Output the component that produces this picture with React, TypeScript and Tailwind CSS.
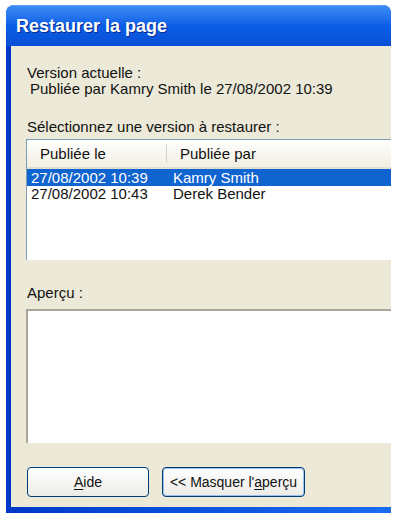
export default function App() {
  const font = { fontFamily: '"Liberation Sans", Arial, sans-serif' };
  return (
    <div className="w-[395px] h-[515px] bg-white overflow-hidden" style={font}>
      <div className="ml-[6px] mt-[5px] w-[385px] h-[508px] flex flex-col rounded-tl-[8px] rounded-tr-[8px] overflow-hidden bg-[#0a54e0]">
        {/* title bar */}
        <div className="h-[41px] shrink-0 flex items-center pl-[10px] bg-gradient-to-b from-[#3d8bf5] via-[#0a5ee6] to-[#0a4fd6] border-t border-[#5aa0ff]">
          <span className="text-white font-bold text-[18px] [text-shadow:1px_1px_0_#0a2a8a]">
            Restaurer la page
          </span>
        </div>
        {/* body with left + bottom frame */}
        <div className="flex-1 flex flex-col bg-gradient-to-r from-[#0038c8] to-[#1a6cf0] pl-[5px] pb-[6px]">
          <div className="flex-1 bg-[#ece9d8] overflow-hidden flex flex-col text-[15px] leading-[16px] text-[#111]">
            <div className="pt-[19px] pl-[16px]">
              <div>Version actuelle :</div>
              <div className="pl-[3px]">Publiée par Kamry Smith le 27/08/2002 10:39</div>
            </div>
            <div className="pl-[16px] mt-[22px]">Sélectionnez une version à restaurer :</div>
            {/* list */}
            <div className="ml-[15px] mt-[4px] h-[121px] w-[400px] shrink-0 bg-white border-t border-l border-[#7f9db9] flex flex-col">
              <div className="h-[29px] flex bg-gradient-to-b from-[#ffffff] to-[#f1efe2] border-b-[2px] border-[#e2dfd0]">
                <div className="w-[140px] flex items-center pl-[13px] border-r border-[#d6d3c6] my-[4px]">Publiée le</div>
                <div className="flex items-center pl-[13px]">Publiée par</div>
              </div>
              <div className="h-[17px] flex items-center bg-[#1064d0] text-white">
                <div className="w-[146px] pl-[4px]">27/08/2002 10:39</div>
                <div>Kamry Smith</div>
              </div>
              <div className="h-[16px] flex items-center">
                <div className="w-[146px] pl-[4px]">27/08/2002 10:43</div>
                <div>Derek Bender</div>
              </div>
            </div>
            <div className="pl-[16px] mt-[25px]">Aperçu :</div>
            {/* preview */}
            <div className="ml-[15px] mt-[8px] h-[134px] w-[400px] shrink-0 bg-white border-t-[2px] border-l-[2px] border-[#a7a69a]" />
            {/* buttons */}
            <div className="flex gap-[13px] pl-[16px] mt-[24px]">
              <button className="w-[122px] h-[30px] rounded-[4px] border border-[#003c74] bg-gradient-to-b from-[#ffffff] to-[#ecebe6] text-[14px]" style={font}>
                <span className="underline underline-offset-2">A</span>ide
              </button>
              <button className="w-[143px] h-[30px] rounded-[4px] border border-[#003c74] bg-gradient-to-b from-[#ffffff] to-[#ecebe6] text-[14px] shadow-[inset_0_0_0_1px_#9cc0f0]" style={font}>
                &lt;&lt; Masquer l'<span className="underline underline-offset-2">a</span>perçu
              </button>
            </div>
          </div>
        </div>
      </div>
    </div>
  );
}
